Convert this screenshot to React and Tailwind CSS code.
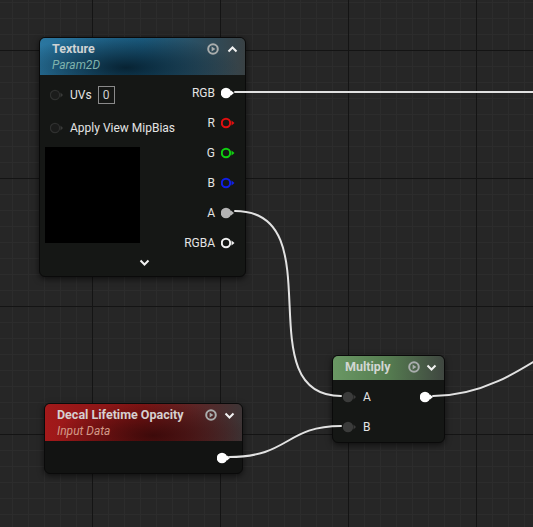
import React from "react";

function Pin({ kind = "filled", color = "#ffffff" }) {
    // one pin: circle + little arrow, drawn as svg
    if (kind === "ring") {
        return (
            <svg width="14" height="12" viewBox="0 0 14 12" className="shrink-0">
                <circle cx="5" cy="6" r="4.2" fill="none" stroke={color} strokeWidth="2" />
                <polygon points="10.5,3.5 13.5,6 10.5,8.5" fill={color} />
            </svg>
        );
    }
    if (kind === "empty") {
        return (
            <svg width="14" height="12" viewBox="0 0 14 12" className="shrink-0">
                <circle cx="5" cy="6" r="4.6" fill="#1b1c1b" stroke="#2f302f" strokeWidth="1.2" />
                <polygon points="10.5,3.5 13,6 10.5,8.5" fill="#393a39" />
            </svg>
        );
    }
    if (kind === "input") {
        return (
            <svg width="14" height="12" viewBox="0 0 14 12" className="shrink-0">
                <circle cx="5" cy="6" r="5.2" fill="#3a3b3a" />
                <polygon points="10.5,3.5 13,6 10.5,8.5" fill="#3a3b3a" />
            </svg>
        );
    }
    return (
        <svg width="14" height="12" viewBox="0 0 14 12" className="shrink-0">
            <circle cx="5" cy="6" r="5.3" fill={color} />
            <polygon points="10,3.5 13,6 10,8.5" fill={color} />
        </svg>
    );
}

function PlayIcon() {
    return (
        <svg width="12" height="12" viewBox="0 0 12 12">
            <circle cx="6" cy="6" r="4.8" fill="none" stroke="#a9adad" strokeWidth="2" />
            <polygon points="4.6,3.4 8.4,6 4.6,8.6" fill="#a9adad" />
        </svg>
    );
}

function Chevron({ up = false }) {
    return (
        <svg width="11" height="11" viewBox="0 0 11 11">
            <polyline
                points={up ? "1.5,7.5 5.5,3.5 9.5,7.5" : "1.5,3.5 5.5,7.5 9.5,3.5"}
                fill="none"
                stroke="#f2f2f2"
                strokeWidth="2"
            />
        </svg>
    );
}

function OutRow({ label, children }) {
    return (
        <div className="flex h-[30px] items-center justify-end gap-[6px] pr-[10px]">
            <span className="text-[12px] text-[#e4e4e4]">{label}</span>
            {children}
        </div>
    );
}

function TextureNode() {
    return (
        <div className="absolute left-[39px] top-[37px] w-[207px] h-[240px] rounded-[6px] border border-[#0a0a0a] bg-[#151715] overflow-hidden shadow-[0_2px_6px_rgba(0,0,0,0.6)]">
            <div className="h-[37px] flex justify-between pl-[12px] pr-[7px] pt-[3px] bg-[radial-gradient(ellipse_55%_90%_at_42%_80%,rgba(5,28,42,0.9),transparent),linear-gradient(to_right,#2a76a0,#1c5f84_50%,#394144)]">
                <div>
                    <div className="text-[12.5px] leading-[16px] font-bold text-[#cfd3d4]">Texture</div>
                    <div className="text-[12px] leading-[16px] italic text-[#7fb3ad]">Param2D</div>
                </div>
                <div className="flex h-[16px] items-center gap-[8px]">
                    <PlayIcon />
                    <Chevron up />
                </div>
            </div>
            <div className="flex">
                <div className="flex-1 pl-[10px]">
                    <div className="mt-[10px] flex h-[20px] items-center gap-[6px]">
                        <Pin kind="empty" />
                        <span className="text-[12px] text-[#e4e4e4]">UVs</span>
                        <div className="flex h-[18px] w-[17px] items-center justify-center border border-[#8a8a8a] text-[12px] text-[#d0d0d0]">
                            0
                        </div>
                    </div>
                    <div className="mt-[13px] flex h-[20px] items-center gap-[6px]">
                        <Pin kind="empty" />
                        <span className="text-[12px] text-[#e4e4e4] whitespace-nowrap">Apply View MipBias</span>
                    </div>
                    <div className="mt-[9px] -ml-[5px] h-[96px] w-[95px] bg-black" />
                </div>
                <div className="w-[60px] pt-[3px]">
                    <OutRow label="RGB"><Pin color="#ffffff" /></OutRow>
                    <OutRow label="R"><Pin kind="ring" color="#e00f0f" /></OutRow>
                    <OutRow label="G"><Pin kind="ring" color="#10d010" /></OutRow>
                    <OutRow label="B"><Pin kind="ring" color="#1020e8" /></OutRow>
                    <OutRow label="A"><Pin color="#b4b4b4" /></OutRow>
                    <OutRow label="RGBA"><Pin kind="ring" color="#f0f0f0" /></OutRow>
                </div>
            </div>
            <div className="flex justify-center pl-[4px] -mt-[1px]">
                <Chevron />
            </div>
        </div>
    );
}

function DecalNode() {
    return (
        <div className="absolute left-[44px] top-[403px] w-[199px] h-[71px] rounded-[6px] border border-[#0a0a0a] bg-[#121312] overflow-hidden shadow-[0_2px_6px_rgba(0,0,0,0.6)]">
            <div className="h-[37px] flex justify-between pl-[12px] pr-[7px] pt-[3px] bg-[radial-gradient(ellipse_50%_90%_at_55%_85%,rgba(50,8,8,0.85),transparent),linear-gradient(to_right,#a3191a,#7e1414_50%,#3d3536)]">
                <div>
                    <div className="text-[12.5px] leading-[16px] font-bold text-[#d6d0d0]">Decal Lifetime Opacity</div>
                    <div className="text-[12px] leading-[16px] italic text-[#d49a88]">Input Data</div>
                </div>
                <div className="flex h-[16px] items-center gap-[7px]">
                    <PlayIcon />
                    <Chevron />
                </div>
            </div>
            <div className="flex h-[33px] items-center justify-end pr-[11px]">
                <Pin color="#ffffff" />
            </div>
        </div>
    );
}

function MultiplyNode() {
    return (
        <div className="absolute left-[332px] top-[355px] w-[113px] h-[88px] rounded-[6px] border border-[#0a0a0a] bg-[#151715] overflow-hidden shadow-[0_2px_6px_rgba(0,0,0,0.6)]">
            <div className="h-[24px] flex justify-between pl-[12px] pr-[7px] pt-[3px] bg-[linear-gradient(to_right,#6a9864,#557c50_50%,#3f4640)]">
                <div className="text-[12.5px] leading-[16px] font-bold text-[#d2d6d2]">Multiply</div>
                <div className="flex h-[16px] items-center gap-[6px]">
                    <PlayIcon />
                    <Chevron />
                </div>
            </div>
            <div className="pt-[2px]">
                <div className="flex h-[30px] items-center pl-[10px] pr-[10px]">
                    <Pin kind="input" />
                    <span className="ml-[6px] text-[12px] text-[#e4e4e4]">A</span>
                    <div className="flex-1" />
                    <Pin color="#ffffff" />
                </div>
                <div className="flex h-[30px] items-center pl-[10px]">
                    <Pin kind="input" />
                    <span className="ml-[6px] text-[12px] text-[#e4e4e4]">B</span>
                </div>
            </div>
        </div>
    );
}

export default function App() {
    return (
        <div className="relative w-[533px] h-[527px] overflow-hidden bg-[#262626] font-['Roboto',sans-serif]">
            <svg className="absolute inset-0" width="533" height="527">
                <defs>
                    <pattern id="minor" width="16" height="16" patternUnits="userSpaceOnUse" patternTransform="translate(12 2)">
                        <path d="M0.5 0 V16 M0 0.5 H16" stroke="#2c2c2c" strokeWidth="1" />
                    </pattern>
                    <pattern id="major" width="128" height="128" patternUnits="userSpaceOnUse" patternTransform="translate(92 50)">
                        <path d="M0.5 0 V128 M0 0.5 H128" stroke="#141414" strokeWidth="1" />
                    </pattern>
                </defs>
                <rect width="533" height="527" fill="#262626" />
                <rect width="533" height="527" fill="url(#minor)" />
                <rect width="533" height="527" fill="url(#major)" />
            </svg>

            <TextureNode />
            <DecalNode />
            <MultiplyNode />

            <svg className="absolute inset-0 pointer-events-none" width="533" height="527">
                <g fill="none" stroke="#e2e2e2" strokeWidth="2" strokeLinecap="round">
                    <path d="M235 92 H540" />
                    <path d="M235 211 C335 211 245 396 341 396" />
                    <path d="M229 457 C290 457 285 426 341 426" />
                    <path d="M433 396 C530 396 580 300 680 300" />
                </g>
            </svg>
        </div>
    );
}
